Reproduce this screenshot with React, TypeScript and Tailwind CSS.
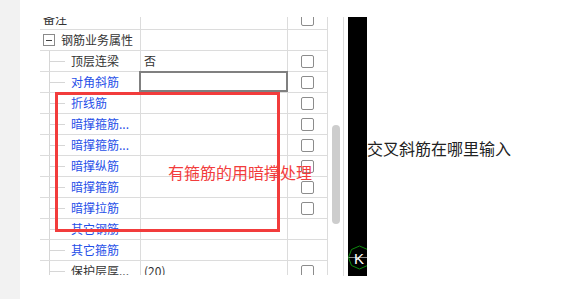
import React from "react";

type Row = {
  name: string;
  kind: "top" | "group" | "child";
  blue?: boolean;
  value?: string;
  input?: boolean;
  check: boolean;
};

const rows: Row[] = [
  { name: "备注", kind: "top", check: true },
  { name: "钢筋业务属性", kind: "group", check: false },
  { name: "顶层连梁", kind: "child", value: "否", check: true },
  { name: "对角斜筋", kind: "child", blue: true, input: true, check: true },
  { name: "折线筋", kind: "child", blue: true, check: true },
  { name: "暗撑箍筋...", kind: "child", blue: true, check: true },
  { name: "暗撑箍筋...", kind: "child", blue: true, check: true },
  { name: "暗撑纵筋", kind: "child", blue: true, check: true },
  { name: "暗撑箍筋", kind: "child", blue: true, check: true },
  { name: "暗撑拉筋", kind: "child", blue: true, check: true },
  { name: "其它钢筋", kind: "child", blue: true, check: false },
  { name: "其它箍筋", kind: "child", blue: true, check: false },
  { name: "保护层厚...", kind: "child", value: "(20)", check: true },
];

function NameCell({ r }: { r: Row }) {
  const color = r.blue ? "text-[#1f4fe8]" : "text-[#333333]";
  if (r.kind === "top") {
    return (
      <div className="w-[101px] h-full border-r border-[#dcdcdc] flex items-center pl-[3px]">
        <span className={color}>{r.name}</span>
      </div>
    );
  }
  if (r.kind === "group") {
    return (
      <div className="w-[101px] h-full border-r border-[#dcdcdc] flex items-center pl-[3px]">
        <div className="w-[12px] h-[12px] border border-[#8a8a8a] flex items-center justify-center bg-white">
          <div className="w-[6px] h-px bg-[#444]" />
        </div>
        <span className={`ml-[6px] whitespace-nowrap ${color}`}>{r.name}</span>
      </div>
    );
  }
  return (
    <div className="w-[101px] h-full border-r border-[#dcdcdc] flex items-center">
      <div className="ml-[9px] w-[16px] self-stretch border-l border-[#d6d6d6] flex items-center">
        <div className="w-[15px] h-px bg-[#d6d6d6]" />
      </div>
      <span className={`ml-[6px] whitespace-nowrap ${color}`}>{r.name}</span>
    </div>
  );
}

export default function App() {
  return (
    <div
      className="relative w-[570px] h-[299px] flex bg-white overflow-hidden text-[12px] leading-none"
      style={{ fontFamily: '"Noto Sans CJK SC", "Noto Sans", sans-serif' }}
    >
      <div className="w-[20px] h-full bg-[#f2f2f2] shrink-0" />
      <div className="flex items-start pt-[17px] pl-[20px]">
        {/* table viewport */}
        <div className="w-[288px] h-[258px] overflow-hidden shrink-0">
          <div className="-mt-[8px] flex flex-col">
            {rows.map((r, i) => (
              <div key={i} className="h-[21px] border-b border-[#dcdcdc] flex shrink-0">
                <NameCell r={r} />
                <div className="relative w-[147px] h-full border-r border-[#dcdcdc] flex items-center pl-[3px]">
                  {r.value && <span className="text-[#333333]">{r.value}</span>}
                  {r.input && (
                    <div className="absolute -top-px -left-[2px] -right-px bottom-0 border-2 border-[#808080]" />
                  )}
                </div>
                <div className="w-[40px] h-full border-r border-[#dcdcdc] flex items-center justify-center">
                  {r.check && (
                    <div className="w-[13px] h-[13px] border border-[#8c8c8c] rounded-[2px] bg-white" />
                  )}
                </div>
              </div>
            ))}
          </div>
        </div>
        {/* scrollbar */}
        <div className="w-[16px] h-[259px] border-r border-[#dcdcdc] shrink-0 flex flex-col">
          <div className="mt-[108px] ml-[4px] w-[8px] h-[99px] rounded-full bg-[#cdcdcd]" />
        </div>
        <div className="w-[4px] shrink-0" />
        {/* black panel */}
        <div className="relative w-[19px] h-[259px] bg-black overflow-hidden shrink-0">
          <svg className="absolute left-0 top-[228px]" width="24" height="26" viewBox="0 0 24 26">
            <line x1="0" y1="12.5" x2="24" y2="12.5" stroke="#8a8a8a" strokeWidth="1" />
            <polygon
              points="11.5,1 19.5,4.5 22.5,12.5 19.5,20.5 11.5,24 3.5,20.5 0.5,12.5 3.5,4.5"
              fill="none"
              stroke="#0d8a0d"
              strokeWidth="1"
            />
          </svg>
          <span
            className="absolute left-[6px] top-[234px] text-[15px] leading-none text-white"
            style={{ fontFamily: '"Liberation Sans", Arial, sans-serif' }}
          >
            K
          </span>
        </div>
        <div className="mt-[121px] text-[16px] leading-[20px] text-[#222222] whitespace-nowrap">
          交叉斜筋在哪里输入
        </div>
      </div>

      {/* annotation overlay */}
      <div className="absolute left-[55px] top-[92px] w-[225px] h-[140px] border-[3px] border-[#f23c3c]" />
      <div className="absolute left-[168px] top-[162px] text-[16px] leading-[20px] text-[#f23c3c] whitespace-nowrap">
        有箍筋的用暗撑处理
      </div>
    </div>
  );
}
